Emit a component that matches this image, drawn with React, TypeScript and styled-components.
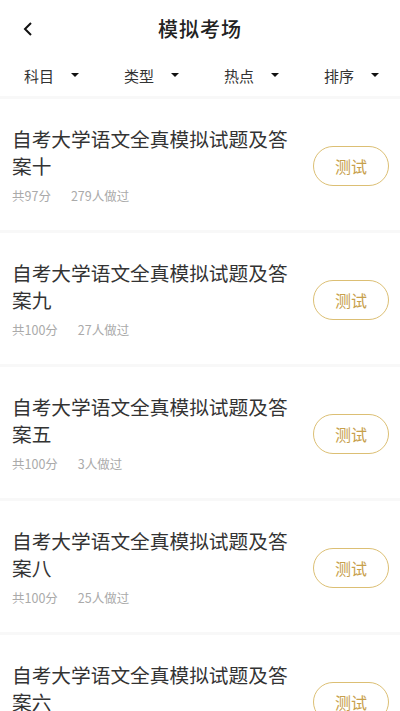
import * as React from 'react';
import styled, { createGlobalStyle } from 'styled-components';

const GlobalStyle = createGlobalStyle`
  html, body {
    margin: 0;
    padding: 0;
    background: #f8f8f8;
    font-family: "Noto Sans CJK SC", "Noto Sans", sans-serif;
  }
`;

const Page = styled.div`
  width: 400px;
  height: 711px;
  background: #f8f8f8;
  overflow: hidden;
`;

const Header = styled.div`
  background: #fff;
  padding-bottom: 2px;
`;

const NavBar = styled.div`
  height: 56px;
  display: flex;
  align-items: center;
  justify-content: center;
  position: relative;
`;

const BackButton = styled.div`
  position: absolute;
  left: 20px;
  top: 20px;
  width: 16px;
  height: 18px;
  display: flex;
  align-items: center;
  justify-content: center;
`;

const Title = styled.h1`
  margin: 0;
  font-size: 20px;
  font-weight: 500;
  color: #222;
  letter-spacing: 1px;
`;

const FilterBar = styled.div`
  height: 38px;
  display: grid;
  grid-template-columns: repeat(4, 1fr);
  align-items: center;
`;

const FilterItem = styled.div`
  display: flex;
  align-items: center;
  padding-left: 24px;
  font-size: 15px;
  color: #333;
`;

const Caret = styled.span`
  width: 0;
  height: 0;
  margin-left: 17px;
  border-left: 4px solid transparent;
  border-right: 4px solid transparent;
  border-top: 4px solid #111;
`;

const List = styled.div`
  display: flex;
  flex-direction: column;
  gap: 3px;
  padding-top: 3px;
`;

const Card = styled.div`
  background: #fff;
  height: 131px;
  box-sizing: border-box;
  padding: 0 11px 0 12px;
  display: flex;
  align-items: center;
  gap: 20px;
`;

const CardBody = styled.div`
  flex: 1;
  align-self: flex-start;
  padding-top: 26px;
`;

const CardTitle = styled.div`
  font-size: 19.7px;
  line-height: 27px;
  color: #333;
`;

const Meta = styled.div`
  margin-top: 9px;
  display: flex;
  gap: 20px;
  font-size: 12.5px;
  line-height: 16px;
  color: #aaa;
`;

const TestButton = styled.button`
  width: 76px;
  height: 40px;
  flex-shrink: 0;
  margin-top: 2px;
  border: 1.5px solid #dcbf74;
  border-radius: 20px;
  background: #fff;
  color: #c7a04b;
  font-family: inherit;
  font-size: 16px;
  padding: 0;
`;

const exams = [
  { name: '自考大学语文全真模拟试题及答案十', score: 97, count: 279 },
  { name: '自考大学语文全真模拟试题及答案九', score: 100, count: 27 },
  { name: '自考大学语文全真模拟试题及答案五', score: 100, count: 3 },
  { name: '自考大学语文全真模拟试题及答案八', score: 100, count: 25 },
  { name: '自考大学语文全真模拟试题及答案六', score: 100, count: 12 },
];

const filters = ['科目', '类型', '热点', '排序'];

export default function App() {
  return (
    <Page>
      <GlobalStyle />
      <Header>
        <NavBar>
          <BackButton>
            <svg width="10" height="14" viewBox="0 0 10 14">
              <path d="M8 1 L2 7 L8 13" fill="none" stroke="#111" strokeWidth="2" />
            </svg>
          </BackButton>
          <Title>模拟考场</Title>
        </NavBar>
        <FilterBar>
          {filters.map(f => (
            <FilterItem key={f}>
              {f}
              <Caret />
            </FilterItem>
          ))}
        </FilterBar>
      </Header>
      <List>
        {exams.map((e, i) => (
          <Card key={i}>
            <CardBody>
              <CardTitle>{e.name}</CardTitle>
              <Meta>
                <span>共{e.score}分</span>
                <span>{e.count}人做过</span>
              </Meta>
            </CardBody>
            <TestButton>测试</TestButton>
          </Card>
        ))}
      </List>
    </Page>
  );
}
